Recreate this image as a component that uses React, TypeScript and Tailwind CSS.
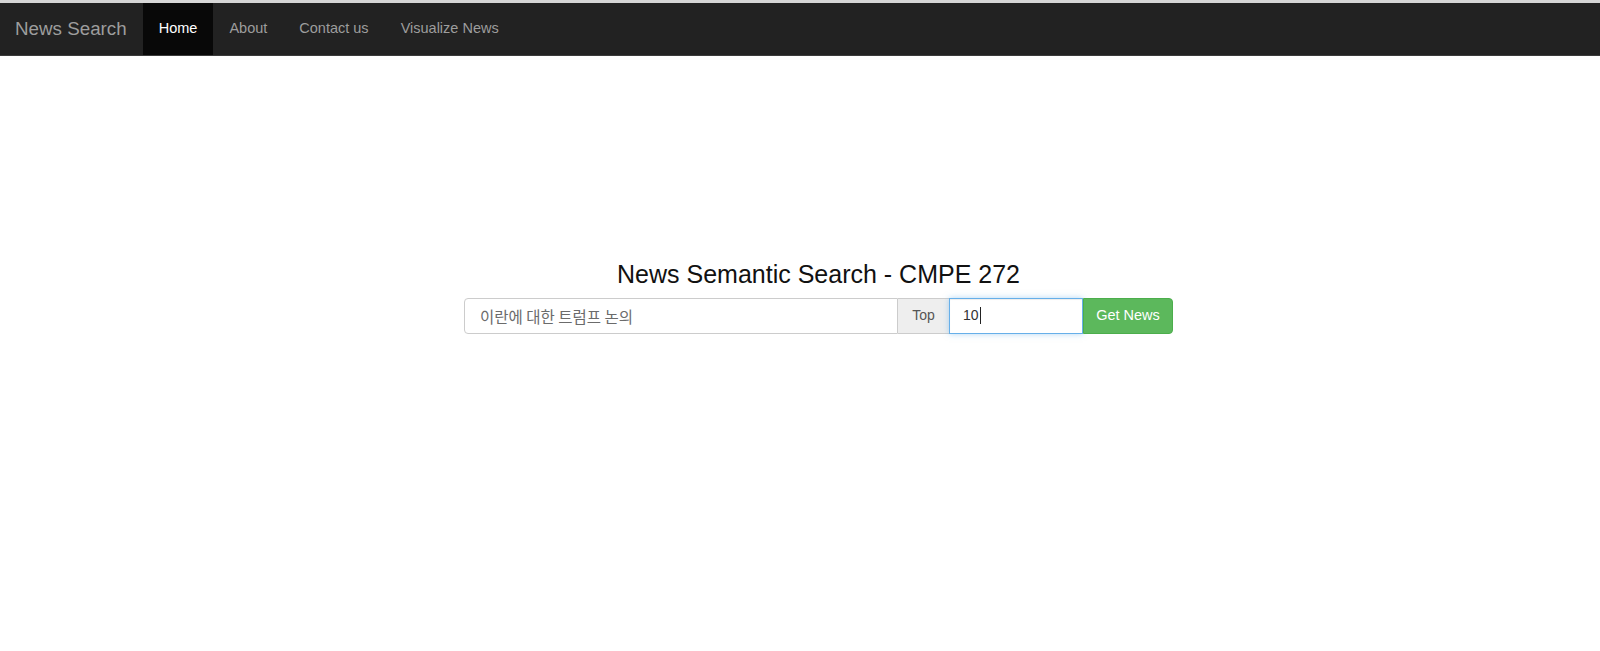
const navLinks = ["Home", "About", "Contact us", "Visualize News"];

function Navbar() {
  return (
    <div>
      <div className="h-[3px] bg-[#d6d6d6]" />
      <nav className="flex h-[53px] items-stretch border-b border-[#3b3b3b] bg-[#222222]">
        <a className="flex items-center pl-[15px] pr-[16px] text-[18.8px] text-[#9d9d9d]">
          News Search
        </a>
        <ul className="flex items-stretch">
          {navLinks.map((link) => (
            <li
              key={link}
              className={
                link === "Home"
                  ? "flex items-center bg-[#080808] px-[16px] text-[14.5px] text-white"
                  : "flex items-center px-[16px] text-[14.5px] text-[#9d9d9d]"
              }
            >
              {link}
            </li>
          ))}
        </ul>
      </nav>
    </div>
  );
}

function SearchForm() {
  return (
    <div className="flex flex-col items-center pl-[37px] pt-[205px]">
      <h3 className="mb-[9px] text-[25px] leading-[1.1] text-[#111]">
        News Semantic Search - CMPE 272
      </h3>
      <div className="flex h-[36px] w-[709px] text-[14px]">
        <input
          readOnly
          value="이란에 대한 트럼프 논의"
          className="h-full w-[434px] rounded-l-[4px] border border-[#ccc] px-[15px] text-[15.5px] text-[#6b6b6b] outline-none"
          style={{ fontFamily: '"Noto Sans CJK KR", "Liberation Sans", sans-serif' }}
        />
        <span className="flex h-full w-[51px] items-center justify-center border-y border-[#ccc] bg-[#eeeeee] text-[#555]">
          Top
        </span>
        <div className="flex h-full w-[134px] items-center border border-[#66afe9] px-[13px] text-[#333] shadow-[inset_0_1px_1px_rgba(0,0,0,.075),0_0_6px_rgba(102,175,233,.5)]">
          10
          <span className="ml-px h-[17px] w-px bg-[#222]" />
        </div>
        <button className="h-full w-[90px] rounded-r-[4px] border border-[#4cae4c] bg-[#5cb85c] text-[14.5px] text-white">
          Get News
        </button>
      </div>
    </div>
  );
}

export default function App() {
  return (
    <div
      className="h-[651px] bg-white"
      style={{ fontFamily: '"Liberation Sans", Arial, sans-serif' }}
    >
      <Navbar />
      <SearchForm />
    </div>
  );
}
